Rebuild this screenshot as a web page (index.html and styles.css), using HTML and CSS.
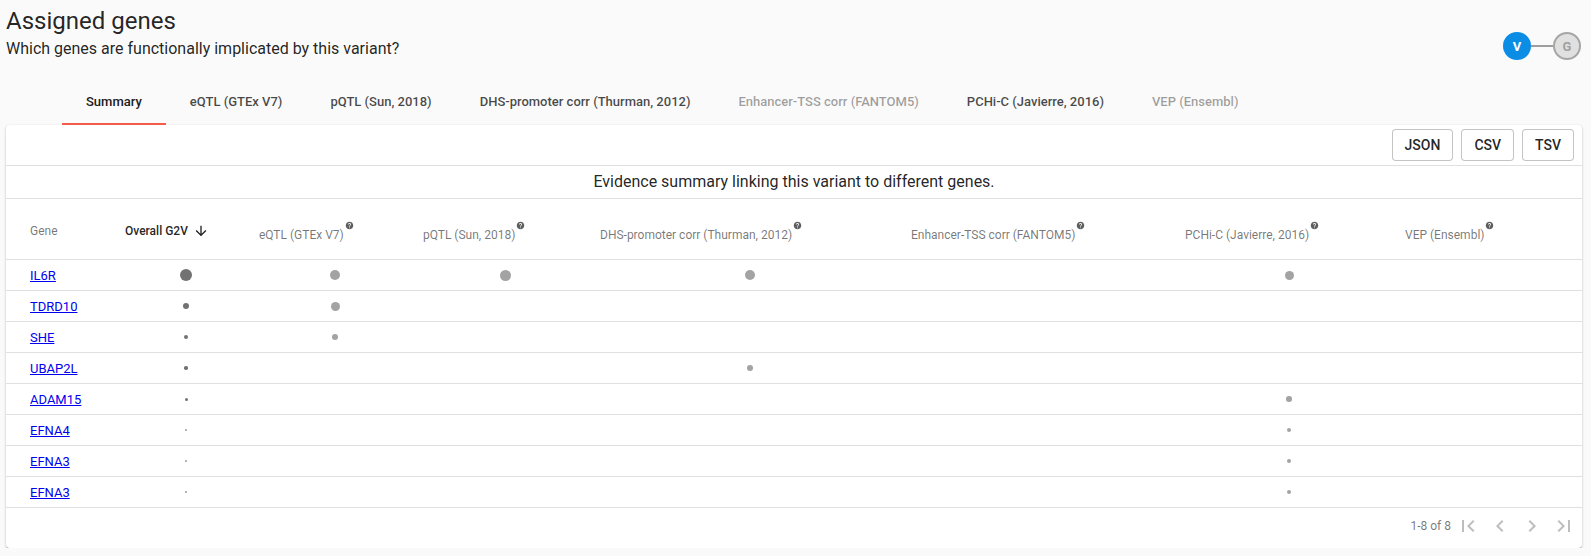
FILE: index.html
```html
<!DOCTYPE html>
<html lang="en">
<head>
<meta charset="utf-8">
<title>Assigned genes</title>
<link rel="stylesheet" href="styles.css">
</head>
<body>
<header class="page-header">
  <div class="heading">
    <h1 class="title">Assigned genes</h1>
    <div class="subtitle">Which genes are functionally implicated by this variant?</div>
  </div>
  <div class="steps">
    <span class="step step-active">V</span>
    <span class="step-line"></span>
    <span class="step step-idle">G</span>
  </div>
</header>

<nav class="tabs">
  <span class="tab tab-selected">Summary</span>
  <span class="tab">eQTL (GTEx V7)</span>
  <span class="tab">pQTL (Sun, 2018)</span>
  <span class="tab">DHS-promoter corr (Thurman, 2012)</span>
  <span class="tab tab-disabled">Enhancer-TSS corr (FANTOM5)</span>
  <span class="tab">PCHi-C (Javierre, 2016)</span>
  <span class="tab tab-disabled">VEP (Ensembl)</span>
</nav>

<section class="card">
  <div class="toolbar">
    <button class="btn">JSON</button>
    <button class="btn">CSV</button>
    <button class="btn">TSV</button>
  </div>
  <div class="caption">Evidence summary linking this variant to different genes.</div>

  <div class="grid-row head-row">
    <div class="cell first">Gene</div>
    <div class="cell strong">Overall G2V<svg class="sort" viewBox="0 0 24 24"><path d="M20 12l-1.41-1.41L13 16.17V4h-2v12.17l-5.58-5.59L4 12l8 8 8-8z"/></svg></div>
    <div class="cell">eQTL (GTEx V7)<svg class="help" viewBox="0 0 24 24"><path d="M12 2C6.48 2 2 6.48 2 12s4.48 10 10 10 10-4.48 10-10S17.52 2 12 2zm1 17h-2v-2h2v2zm2.07-7.75l-.9.92C13.45 12.9 13 13.5 13 15h-2v-.5c0-1.1.45-2.1 1.17-2.83l1.24-1.26c.37-.36.59-.86.59-1.41 0-1.1-.9-2-2-2s-2 .9-2 2H8c0-2.21 1.79-4 4-4s4 1.79 4 4c0 .88-.36 1.68-.93 2.25z"/></svg></div>
    <div class="cell">pQTL (Sun, 2018)<svg class="help" viewBox="0 0 24 24"><path d="M12 2C6.48 2 2 6.48 2 12s4.48 10 10 10 10-4.48 10-10S17.52 2 12 2zm1 17h-2v-2h2v2zm2.07-7.75l-.9.92C13.45 12.9 13 13.5 13 15h-2v-.5c0-1.1.45-2.1 1.17-2.83l1.24-1.26c.37-.36.59-.86.59-1.41 0-1.1-.9-2-2-2s-2 .9-2 2H8c0-2.21 1.79-4 4-4s4 1.79 4 4c0 .88-.36 1.68-.93 2.25z"/></svg></div>
    <div class="cell">DHS-promoter corr (Thurman, 2012)<svg class="help" viewBox="0 0 24 24"><path d="M12 2C6.48 2 2 6.48 2 12s4.48 10 10 10 10-4.48 10-10S17.52 2 12 2zm1 17h-2v-2h2v2zm2.07-7.75l-.9.92C13.45 12.9 13 13.5 13 15h-2v-.5c0-1.1.45-2.1 1.17-2.83l1.24-1.26c.37-.36.59-.86.59-1.41 0-1.1-.9-2-2-2s-2 .9-2 2H8c0-2.21 1.79-4 4-4s4 1.79 4 4c0 .88-.36 1.68-.93 2.25z"/></svg></div>
    <div class="cell">Enhancer-TSS corr (FANTOM5)<svg class="help" viewBox="0 0 24 24"><path d="M12 2C6.48 2 2 6.48 2 12s4.48 10 10 10 10-4.48 10-10S17.52 2 12 2zm1 17h-2v-2h2v2zm2.07-7.75l-.9.92C13.45 12.9 13 13.5 13 15h-2v-.5c0-1.1.45-2.1 1.17-2.83l1.24-1.26c.37-.36.59-.86.59-1.41 0-1.1-.9-2-2-2s-2 .9-2 2H8c0-2.21 1.79-4 4-4s4 1.79 4 4c0 .88-.36 1.68-.93 2.25z"/></svg></div>
    <div class="cell">PCHi-C (Javierre, 2016)<svg class="help" viewBox="0 0 24 24"><path d="M12 2C6.48 2 2 6.48 2 12s4.48 10 10 10 10-4.48 10-10S17.52 2 12 2zm1 17h-2v-2h2v2zm2.07-7.75l-.9.92C13.45 12.9 13 13.5 13 15h-2v-.5c0-1.1.45-2.1 1.17-2.83l1.24-1.26c.37-.36.59-.86.59-1.41 0-1.1-.9-2-2-2s-2 .9-2 2H8c0-2.21 1.79-4 4-4s4 1.79 4 4c0 .88-.36 1.68-.93 2.25z"/></svg></div>
    <div class="cell">VEP (Ensembl)<svg class="help" viewBox="0 0 24 24"><path d="M12 2C6.48 2 2 6.48 2 12s4.48 10 10 10 10-4.48 10-10S17.52 2 12 2zm1 17h-2v-2h2v2zm2.07-7.75l-.9.92C13.45 12.9 13 13.5 13 15h-2v-.5c0-1.1.45-2.1 1.17-2.83l1.24-1.26c.37-.36.59-.86.59-1.41 0-1.1-.9-2-2-2s-2 .9-2 2H8c0-2.21 1.79-4 4-4s4 1.79 4 4c0 .88-.36 1.68-.93 2.25z"/></svg></div>
  </div>

  <div class="grid-row body-row">
    <div class="cell first"><a href="#">IL6R</a></div>
    <div class="cell dotcell"><span class="dot dark" style="width:12px;height:12px"></span></div>
    <div class="cell dotcell"><span class="dot" style="width:10px;height:10px"></span></div>
    <div class="cell dotcell"><span class="dot" style="width:11px;height:11px"></span></div>
    <div class="cell dotcell"><span class="dot" style="width:10px;height:10px"></span></div>
    <div class="cell dotcell"></div>
    <div class="cell dotcell"><span class="dot" style="width:9px;height:9px"></span></div>
    <div class="cell dotcell"></div>
  </div>
  <div class="grid-row body-row">
    <div class="cell first"><a href="#">TDRD10</a></div>
    <div class="cell dotcell"><span class="dot dark" style="width:6px;height:6px"></span></div>
    <div class="cell dotcell"><span class="dot" style="width:9px;height:9px"></span></div>
    <div class="cell dotcell"></div>
    <div class="cell dotcell"></div>
    <div class="cell dotcell"></div>
    <div class="cell dotcell"></div>
    <div class="cell dotcell"></div>
  </div>
  <div class="grid-row body-row">
    <div class="cell first"><a href="#">SHE</a></div>
    <div class="cell dotcell"><span class="dot dark" style="width:4px;height:4px"></span></div>
    <div class="cell dotcell"><span class="dot" style="width:6px;height:6px"></span></div>
    <div class="cell dotcell"></div>
    <div class="cell dotcell"></div>
    <div class="cell dotcell"></div>
    <div class="cell dotcell"></div>
    <div class="cell dotcell"></div>
  </div>
  <div class="grid-row body-row">
    <div class="cell first"><a href="#">UBAP2L</a></div>
    <div class="cell dotcell"><span class="dot dark" style="width:3.5px;height:3.5px"></span></div>
    <div class="cell dotcell"></div>
    <div class="cell dotcell"></div>
    <div class="cell dotcell"><span class="dot" style="width:6px;height:6px"></span></div>
    <div class="cell dotcell"></div>
    <div class="cell dotcell"></div>
    <div class="cell dotcell"></div>
  </div>
  <div class="grid-row body-row">
    <div class="cell first"><a href="#">ADAM15</a></div>
    <div class="cell dotcell"><span class="dot dark" style="width:3px;height:3px"></span></div>
    <div class="cell dotcell"></div>
    <div class="cell dotcell"></div>
    <div class="cell dotcell"></div>
    <div class="cell dotcell"></div>
    <div class="cell dotcell"><span class="dot" style="width:5.5px;height:5.5px"></span></div>
    <div class="cell dotcell"></div>
  </div>
  <div class="grid-row body-row">
    <div class="cell first"><a href="#">EFNA4</a></div>
    <div class="cell dotcell"><span class="dot dark light-dot" style="width:2px;height:2px"></span></div>
    <div class="cell dotcell"></div>
    <div class="cell dotcell"></div>
    <div class="cell dotcell"></div>
    <div class="cell dotcell"></div>
    <div class="cell dotcell"><span class="dot" style="width:4.5px;height:4.5px"></span></div>
    <div class="cell dotcell"></div>
  </div>
  <div class="grid-row body-row">
    <div class="cell first"><a href="#">EFNA3</a></div>
    <div class="cell dotcell"><span class="dot dark light-dot" style="width:2px;height:2px"></span></div>
    <div class="cell dotcell"></div>
    <div class="cell dotcell"></div>
    <div class="cell dotcell"></div>
    <div class="cell dotcell"></div>
    <div class="cell dotcell"><span class="dot" style="width:4px;height:4px"></span></div>
    <div class="cell dotcell"></div>
  </div>
  <div class="grid-row body-row">
    <div class="cell first"><a href="#">EFNA3</a></div>
    <div class="cell dotcell"><span class="dot dark light-dot" style="width:2px;height:2px"></span></div>
    <div class="cell dotcell"></div>
    <div class="cell dotcell"></div>
    <div class="cell dotcell"></div>
    <div class="cell dotcell"></div>
    <div class="cell dotcell"><span class="dot" style="width:4px;height:4px"></span></div>
    <div class="cell dotcell"></div>
  </div>

  <div class="pager">
    <span class="pager-text">1-8 of 8</span>
    <svg class="pager-icon" viewBox="0 0 24 24"><path d="M18.41 16.59L13.82 12l4.59-4.59L17 6l-6 6 6 6zM6 6h2v12H6z"/></svg>
    <svg class="pager-icon" viewBox="0 0 24 24"><path d="M15.41 7.41L14 6l-6 6 6 6 1.41-1.41L10.83 12z"/></svg>
    <svg class="pager-icon" viewBox="0 0 24 24"><path d="M10 6L8.59 7.41 13.17 12l-4.58 4.59L10 18l6-6z"/></svg>
    <svg class="pager-icon" viewBox="0 0 24 24"><path d="M5.59 7.41L10.18 12l-4.59 4.59L7 18l6-6-6-6zM16 6h2v12h-2z"/></svg>
  </div>
</section>
</body>
</html>
```

FILE: styles.css
```css
* { box-sizing: border-box; }

html, body {
  margin: 0;
  padding: 0;
  background: #fafafa;
  font-family: Roboto, "Liberation Sans", Arial, sans-serif;
  color: rgba(0, 0, 0, 0.87);
}

.page-header {
  display: flex;
  justify-content: space-between;
  align-items: flex-end;
  padding: 5px 10px 0 6px;
}

.title {
  margin: 0;
  font-size: 24px;
  line-height: 32px;
  font-weight: 400;
  color: rgba(0, 0, 0, 0.87);
}

.subtitle {
  font-size: 16px;
  line-height: 24px;
  color: rgba(0, 0, 0, 0.87);
}

.steps {
  display: flex;
  align-items: center;
  margin-bottom: 1px;
}

.step {
  width: 28px;
  height: 28px;
  border-radius: 50%;
  display: flex;
  align-items: center;
  justify-content: center;
  font-size: 13px;
  font-weight: 700;
}

.step-active {
  background: #0b8de6;
  color: #fff;
}

.step-idle {
  background: #e0e0e0;
  border: 2px solid #a6a6a6;
  color: #a0a0a0;
}

.step-line {
  width: 22px;
  height: 2px;
  background: #9e9e9e;
}

.tabs {
  display: flex;
  height: 48px;
  margin-top: 16px;
  padding-left: 62px;
}

.tab {
  display: flex;
  align-items: center;
  padding: 2px 24px 0 24px;
  font-size: 13px;
  font-weight: 500;
  color: rgba(0, 0, 0, 0.72);
  border-bottom: 2px solid transparent;
}

.tab-selected {
  color: #1a1a1a;
  border-bottom-color: #f45b4b;
}

.tab-disabled {
  color: rgba(0, 0, 0, 0.38);
}

.card {
  margin: 0 9px 0 6px;
  background: #fff;
  border-radius: 4px;
  box-shadow: 0 1px 3px 0 rgba(0, 0, 0, 0.2), 0 1px 1px 0 rgba(0, 0, 0, 0.14), 0 2px 1px -1px rgba(0, 0, 0, 0.12);
}

.toolbar {
  display: flex;
  justify-content: flex-end;
  gap: 8px;
  height: 41px;
  padding: 4px 8px 0 8px;
  border-bottom: 1px solid #e0e0e0;
}

.btn {
  height: 32px;
  padding: 0 12px;
  background: #fff;
  border: 1px solid rgba(0, 0, 0, 0.23);
  border-radius: 4px;
  font-family: Roboto, "Liberation Sans", Arial, sans-serif;
  font-size: 14px;
  font-weight: 500;
  color: rgba(0, 0, 0, 0.87);
}

.caption {
  height: 33px;
  line-height: 32px;
  text-align: center;
  font-size: 16px;
  border-bottom: 1px solid #e0e0e0;
}

.grid-row {
  display: grid;
  grid-template-columns: 113px 134px 164px 177px 311px 274px 220px 183px;
  border-bottom: 1px solid #e0e0e0;
}

.head-row {
  height: 61px;
  padding-top: 4px;
  align-items: center;
  font-size: 12px;
  color: rgba(0, 0, 0, 0.54);
}

.body-row {
  height: 31px;
  align-items: center;
  font-size: 13px;
}

.cell {
  padding: 0 6px;
  white-space: nowrap;
}

.cell.first {
  padding-left: 24px;
}

.strong {
  color: rgba(0, 0, 0, 0.87);
  font-weight: 500;
  display: flex;
  align-items: center;
}

.sort {
  width: 16px;
  height: 16px;
  margin-left: 5px;
  fill: rgba(0, 0, 0, 0.87);
}

.help {
  width: 9px;
  height: 9px;
  margin-left: 1px;
  vertical-align: 9px;
  fill: #5f5f5f;
}

.body-row a {
  color: #0000ee;
  text-decoration: underline;
}

.dotcell {
  display: flex;
  justify-content: center;
  align-items: center;
}

.dot {
  display: block;
  border-radius: 50%;
  background: #a3a3a3;
}

.dot.dark {
  background: #727272;
}

.dot.light-dot {
  background: #9a9a9a;
}

.pager {
  display: flex;
  justify-content: flex-end;
  align-items: center;
  height: 40px;
  padding-right: 6px;
  padding-bottom: 4px;
  gap: 8px;
}

.pager-text {
  font-size: 12px;
  color: rgba(0, 0, 0, 0.54);
  margin-right: -3px;
}

.pager-icon {
  width: 24px;
  height: 24px;
  fill: rgba(0, 0, 0, 0.26);
}
```
